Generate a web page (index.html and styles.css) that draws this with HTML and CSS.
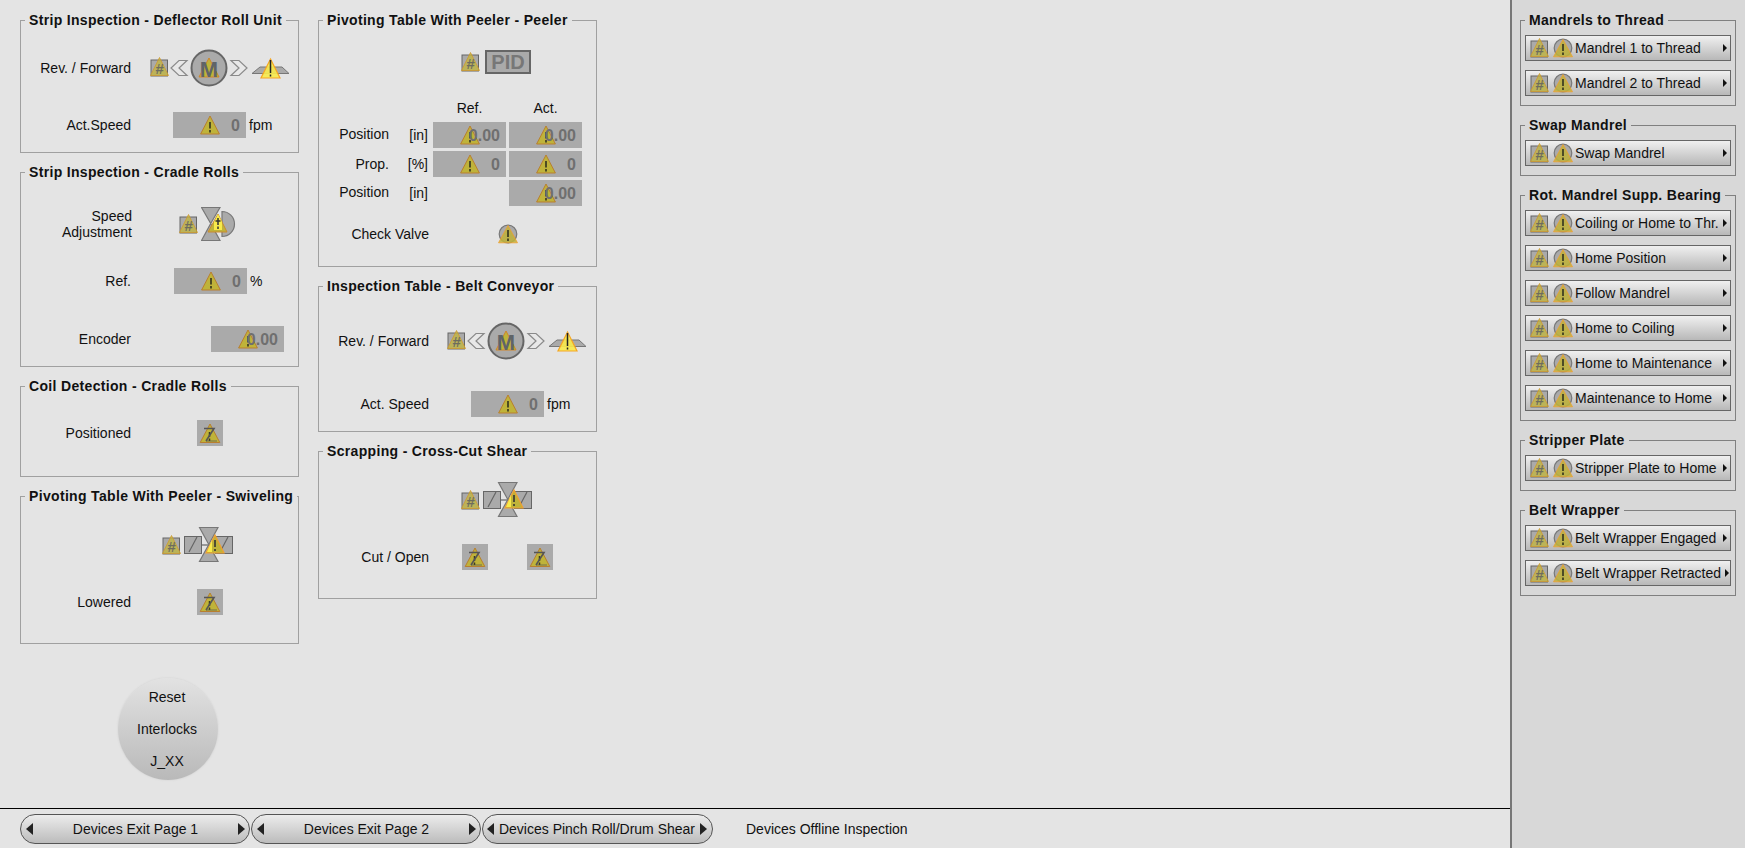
FILE: index.html
```html
<!DOCTYPE html>
<html lang="en">
<head>
    <meta charset="UTF-8">
    <title>Devices Offline Inspection</title>
    <link rel="stylesheet" href="styles.css">
</head>
<body>
    <!-- shared symbols -->
    <svg class="defs">
        <symbol id="warn" viewBox="0 0 20 20">
            <polygon points="10,1 19.4,19 0.6,19" fill="#bfb33a" stroke="#b97f2f" stroke-width="1"/>
            <path d="M10 7V13.5M10 15V17.5" stroke="#3a3a20" stroke-width="1.7" fill="none"/>
        </symbol>
        <symbol id="hash" viewBox="0 0 19 20">
            <rect x="1" y="3" width="16.5" height="16" fill="#aaa" stroke="#666"/>
            <polygon points="9.5,0.5 18.5,18.5 0.5,18.5" fill="#c2b63c" fill-opacity=".75" stroke="#cf9a30" stroke-width=".8"/>
            <text x="9.5" y="17" text-anchor="middle" font-family="Liberation Sans" font-style="italic" font-weight="700" font-size="15" fill="#5f6060" fill-opacity=".85">#</text>
        </symbol>
        <symbol id="warn-round" viewBox="0 0 20 20">
            <circle cx="10" cy="10" r="8.8" fill="#aaa" stroke="#777" stroke-width="1.2"/>
            <polygon points="10,1.5 19.5,18.8 0.5,18.8" fill="#bfb33a" fill-opacity=".85" stroke="#f0a030" stroke-width=".8"/>
            <path d="M10 6V13M10 14.5V17" stroke="#3a3a20" stroke-width="1.7" fill="none"/>
        </symbol>
        <symbol id="contact" viewBox="0 0 26 26">
            <rect width="26" height="26" fill="#aaa"/>
            <polygon points="13,4 22.8,22.5 3.2,22.5" fill="#bfb33a" stroke="#b97f2f" stroke-width="1"/>
            <path d="M12.5 12V17M12.5 18.5V21" stroke="#3a3a20" stroke-width="1.5" fill="none"/>
            <path d="M7 8.5H17L9 21" stroke="#555" stroke-width="1.6" fill="none"/>
            <path d="M9 21H20" stroke="#555" stroke-width="1.2" stroke-opacity=".6" fill="none"/>
        </symbol>
        <symbol id="drive" viewBox="0 0 140 40">
            <use href="#hash" x="0" y="9" width="19" height="20"/>
            <polygon points="29,12.5 37,12.5 29,20 37,27.5 29,27.5 21,20" fill="#e8e8e8" stroke="#8a8a8a" stroke-width="1.2"/>
            <circle cx="59" cy="20" r="17.5" fill="#aaa" stroke="#666" stroke-width="2"/>
            <polygon points="59,10 69,29 49,29" fill="#bfb33a" stroke="#d0852a" stroke-width="1"/>
            <text x="59" y="28.5" text-anchor="middle" font-family="Liberation Sans" font-weight="700" font-size="22" fill="#5f6468">M</text>
            <polygon points="89,12.5 81,12.5 89,20 81,27.5 89,27.5 97,20" fill="#e8e8e8" stroke="#8a8a8a" stroke-width="1.2"/>
            <polygon points="110,19 132,19 139,25.5 102,25.5" fill="#aaa" stroke="#777"/>
            <polygon points="120.5,11 130,30 111,30" fill="#f7ea4a" fill-opacity=".9" stroke="#f5a623" stroke-width="1.2"/>
            <path d="M120.5 12V25M120.5 26.5V28.5" stroke="#222" stroke-width="1.5" fill="none"/>
        </symbol>
        <symbol id="valve-half" viewBox="0 0 36 34">
            <path d="M21 4.5A12.5 12.5 0 0 1 21 29.5Z" fill="#aaa" stroke="#777" stroke-width="1.2"/>
            <polygon points="0.5,0.5 19,0.5 9.7,16.5 19,33.5 0.5,33.5 9.7,16.5" fill="#aaa" stroke="#777" stroke-width="1.2"/>
            <polygon points="17,7 26,25 7,25" fill="#bfb33a" stroke="#c98a30" stroke-width="1"/>
            <polygon points="17,7 21,15 21,23 13,23 13,15" fill="#f7ea4a"/>
            <path d="M17 11V18M14.5 14H19.5M17 19.5V22" stroke="#333" stroke-width="1.5" fill="none"/>
        </symbol>
        <symbol id="actuator" viewBox="0 0 50 36">
            <rect x="0.5" y="9.5" width="17" height="17" fill="#aaa" stroke="#666"/>
            <path d="M5 25L13 10" stroke="#666" stroke-width="1.2"/>
            <path d="M17 18H33" stroke="#666" stroke-width="1.2"/>
            <rect x="31.5" y="9.5" width="17" height="17" fill="#aaa" stroke="#666"/>
            <path d="M36 25L44 10" stroke="#666" stroke-width="1.2"/>
            <polygon points="15.5,0.5 34,0.5 24.8,17.5 34,34.5 15.5,34.5 24.8,17.5" fill="#aaa" stroke="#777" stroke-width="1.2"/>
            <polygon points="31,8 40,26 22,26" fill="#bfb33a" stroke="#f0a030" stroke-width="1.2"/>
            <polygon points="28,13 28,25 23,25" fill="#f7ea4a"/>
            <path d="M31 13V20M31 22V24" stroke="#333" stroke-width="1.6" fill="none"/>
        </symbol>
    </svg>

    <div class="page">
        <div class="main">
            <div class="columns">
                <div class="col">
                    <fieldset class="panel h141">
                        <legend>Strip Inspection - Deflector Roll Unit</legend>
                        <div class="row mt27">
                            <span class="label w110">Rev. / Forward</span>
                            <svg class="ico-drive ml19"><use href="#drive"/></svg>
                        </div>
                        <div class="row mt31">
                            <span class="label w110">Act.Speed</span>
                            <div class="value ml42"><svg class="ico-warn"><use href="#warn"/></svg><span class="num">0</span></div>
                            <span class="unit-after">fpm</span>
                        </div>
                    </fieldset>
                    <fieldset class="panel h203">
                        <legend>Strip Inspection - Cradle Rolls</legend>
                        <div class="row mt31">
                            <span class="label w111">Speed<br>Adjustment</span>
                            <svg class="ico-hash ml47"><use href="#hash"/></svg>
                            <svg class="ico-valve ml3"><use href="#valve-half"/></svg>
                        </div>
                        <div class="row mt31">
                            <span class="label w110">Ref.</span>
                            <div class="value ml43"><svg class="ico-warn"><use href="#warn"/></svg><span class="num">0</span></div>
                            <span class="unit-after">%</span>
                        </div>
                        <div class="row mt32">
                            <span class="label w110">Encoder</span>
                            <div class="value ml80"><svg class="ico-warn"><use href="#warn"/></svg><span class="num">0.00</span></div>
                        </div>
                    </fieldset>
                    <fieldset class="panel h99">
                        <legend>Coil Detection - Cradle Rolls</legend>
                        <div class="row mt26">
                            <span class="label w110">Positioned</span>
                            <svg class="ico-contact ml66"><use href="#contact"/></svg>
                        </div>
                    </fieldset>
                    <fieldset class="panel h156">
                        <legend>Pivoting Table With Peeler - Swiveling</legend>
                        <div class="row mt28">
                            <svg class="ico-hash ml141"><use href="#hash"/></svg>
                            <svg class="ico-actuator ml3"><use href="#actuator"/></svg>
                        </div>
                        <div class="row mt31">
                            <span class="label w110">Lowered</span>
                            <svg class="ico-contact ml66"><use href="#contact"/></svg>
                        </div>
                    </fieldset>
                    <div class="reset">
                        <span>Reset</span>
                        <span>Interlocks</span>
                        <span>J_XX</span>
                    </div>
                </div>

                <div class="col">
                    <fieldset class="panel h255">
                        <legend>Pivoting Table With Peeler - Peeler</legend>
                        <div class="row mt21">
                            <svg class="ico-hash ml142"><use href="#hash"/></svg>
                            <div class="pid">PID</div>
                        </div>
                        <div class="table">
                            <span></span>
                            <span></span>
                            <span class="head">Ref.</span>
                            <span class="head">Act.</span>
                            <span class="label up">Position</span>
                            <span class="label unit">[in]</span>
                            <div class="value"><svg class="ico-warn"><use href="#warn"/></svg><span class="num">0.00</span></div>
                            <div class="value"><svg class="ico-warn"><use href="#warn"/></svg><span class="num">0.00</span></div>
                            <span class="label">Prop.</span>
                            <span class="label unit">[%]</span>
                            <div class="value"><svg class="ico-warn"><use href="#warn"/></svg><span class="num">0</span></div>
                            <div class="value"><svg class="ico-warn"><use href="#warn"/></svg><span class="num">0</span></div>
                            <span class="label up">Position</span>
                            <span class="label unit">[in]</span>
                            <span></span>
                            <div class="value"><svg class="ico-warn"><use href="#warn"/></svg><span class="num">0.00</span></div>
                        </div>
                        <div class="row mt15">
                            <span class="label w110">Check Valve</span>
                            <svg class="ico-round ml69"><use href="#warn-round"/></svg>
                        </div>
                    </fieldset>
                    <fieldset class="panel h154">
                        <legend>Inspection Table - Belt Conveyor</legend>
                        <div class="row mt34">
                            <span class="label w110">Rev. / Forward</span>
                            <svg class="ico-drive ml18"><use href="#drive"/></svg>
                        </div>
                        <div class="row mt37">
                            <span class="label w110">Act. Speed</span>
                            <div class="value ml42"><svg class="ico-warn"><use href="#warn"/></svg><span class="num">0</span></div>
                            <span class="unit-after">fpm</span>
                        </div>
                    </fieldset>
                    <fieldset class="panel h156">
                        <legend>Scrapping - Cross-Cut Shear</legend>
                        <div class="row mt28">
                            <svg class="ico-hash ml142"><use href="#hash"/></svg>
                            <svg class="ico-actuator ml3"><use href="#actuator"/></svg>
                        </div>
                        <div class="row mt31">
                            <span class="label w110">Cut / Open</span>
                            <svg class="ico-contact ml33"><use href="#contact"/></svg>
                            <svg class="ico-contact ml39"><use href="#contact"/></svg>
                        </div>
                    </fieldset>
                </div>
            </div>

            <div class="nav">
                <div class="nav-btn"><i class="arrow-left"></i>Devices Exit Page 1<i class="arrow-right"></i></div>
                <div class="nav-btn"><i class="arrow-left"></i>Devices Exit Page 2<i class="arrow-right"></i></div>
                <div class="nav-btn tight"><i class="arrow-left"></i>Devices Pinch Roll/Drum Shear<i class="arrow-right"></i></div>
                <span class="nav-current">Devices Offline Inspection</span>
            </div>
        </div>

        <div class="sidebar">
            <fieldset class="panel side h94">
                <legend>Mandrels to Thread</legend>
                <div class="btn-list">
                    <div class="seq-btn"><svg class="ico-hash"><use href="#hash"/></svg><svg class="ico-round"><use href="#warn-round"/></svg><span>Mandrel 1 to Thread</span><i class="arrow-small"></i></div>
                    <div class="seq-btn"><svg class="ico-hash"><use href="#hash"/></svg><svg class="ico-round"><use href="#warn-round"/></svg><span>Mandrel 2 to Thread</span><i class="arrow-small"></i></div>
                </div>
            </fieldset>
            <fieldset class="panel side h59">
                <legend>Swap Mandrel</legend>
                <div class="btn-list">
                    <div class="seq-btn"><svg class="ico-hash"><use href="#hash"/></svg><svg class="ico-round"><use href="#warn-round"/></svg><span>Swap Mandrel</span><i class="arrow-small"></i></div>
                </div>
            </fieldset>
            <fieldset class="panel side h234">
                <legend>Rot. Mandrel Supp. Bearing</legend>
                <div class="btn-list">
                    <div class="seq-btn"><svg class="ico-hash"><use href="#hash"/></svg><svg class="ico-round"><use href="#warn-round"/></svg><span>Coiling or Home to Thr.</span><i class="arrow-small"></i></div>
                    <div class="seq-btn"><svg class="ico-hash"><use href="#hash"/></svg><svg class="ico-round"><use href="#warn-round"/></svg><span>Home Position</span><i class="arrow-small"></i></div>
                    <div class="seq-btn"><svg class="ico-hash"><use href="#hash"/></svg><svg class="ico-round"><use href="#warn-round"/></svg><span>Follow Mandrel</span><i class="arrow-small"></i></div>
                    <div class="seq-btn"><svg class="ico-hash"><use href="#hash"/></svg><svg class="ico-round"><use href="#warn-round"/></svg><span>Home to Coiling</span><i class="arrow-small"></i></div>
                    <div class="seq-btn"><svg class="ico-hash"><use href="#hash"/></svg><svg class="ico-round"><use href="#warn-round"/></svg><span>Home to Maintenance</span><i class="arrow-small"></i></div>
                    <div class="seq-btn"><svg class="ico-hash"><use href="#hash"/></svg><svg class="ico-round"><use href="#warn-round"/></svg><span>Maintenance to Home</span><i class="arrow-small"></i></div>
                </div>
            </fieldset>
            <fieldset class="panel side h59">
                <legend>Stripper Plate</legend>
                <div class="btn-list">
                    <div class="seq-btn"><svg class="ico-hash"><use href="#hash"/></svg><svg class="ico-round"><use href="#warn-round"/></svg><span>Stripper Plate to Home</span><i class="arrow-small"></i></div>
                </div>
            </fieldset>
            <fieldset class="panel side h94">
                <legend>Belt Wrapper</legend>
                <div class="btn-list">
                    <div class="seq-btn"><svg class="ico-hash"><use href="#hash"/></svg><svg class="ico-round"><use href="#warn-round"/></svg><span>Belt Wrapper Engaged</span><i class="arrow-small"></i></div>
                    <div class="seq-btn"><svg class="ico-hash"><use href="#hash"/></svg><svg class="ico-round"><use href="#warn-round"/></svg><span>Belt Wrapper Retracted</span><i class="arrow-small"></i></div>
                </div>
            </fieldset>
        </div>
    </div>
</body>
</html>
```

FILE: styles.css
```css
body {
    margin: 0;
    background-color: #e4e4e4;
    color: #111;
    font-family: "Liberation Sans", Arial, sans-serif;
    font-size: 14px;
    overflow: hidden;
}

.defs {
    display: none;
}

.page {
    display: flex;
    height: 848px;
}

.main {
    display: flex;
    flex-direction: column;
    width: 1510px;
}

.columns {
    display: flex;
    flex: 1;
    gap: 19px;
    padding: 12px 0 0 20px;
}

.col {
    display: flex;
    flex-direction: column;
    gap: 11px;
    width: 279px;
}

/* group boxes */
.panel {
    box-sizing: border-box;
    flex: none;
    margin: 0;
    padding: 0;
    min-width: 0;
    border: 1px solid #a0a0a0;
}

.panel legend {
    margin-left: 4px;
    padding: 0 4px;
    font-weight: bold;
    line-height: 16px;
    letter-spacing: 0.33px;
    white-space: nowrap;
}

.h59 { height: 59px; }
.h94 { height: 94px; }
.h99 { height: 99px; }
.h141 { height: 141px; }
.h154 { height: 154px; }
.h156 { height: 156px; }
.h203 { height: 203px; }
.h234 { height: 234px; }
.h255 { height: 255px; }

.row {
    display: flex;
    align-items: center;
    height: 26px;
}

.mt15 { margin-top: 15px; }
.mt21 { margin-top: 21px; }
.mt26 { margin-top: 26px; }
.mt27 { margin-top: 27px; }
.mt28 { margin-top: 28px; }
.mt31 { margin-top: 31px; }
.mt32 { margin-top: 32px; }
.mt34 { margin-top: 34px; }
.mt37 { margin-top: 37px; }

.ml3 { margin-left: 3px; }
.ml18 { margin-left: 18px; }
.ml19 { margin-left: 19px; }
.ml33 { margin-left: 33px; }
.ml39 { margin-left: 39px; }
.ml42 { margin-left: 42px; }
.ml43 { margin-left: 43px; }
.ml47 { margin-left: 47px; }
.ml66 { margin-left: 66px; }
.ml69 { margin-left: 69px; }
.ml80 { margin-left: 80px; }
.ml141 { margin-left: 141px; }
.ml142 { margin-left: 142px; }

.label {
    flex: none;
    text-align: right;
    line-height: 16px;
}

.w110 { width: 110px; }
.w111 { width: 111px; }

.unit-after {
    margin-left: 3px;
}

/* numeric display, digits sit over the stale-data triangle */
.value {
    position: relative;
    flex: none;
    box-sizing: border-box;
    width: 73px;
    height: 26px;
    padding-right: 6px;
    background-color: #aaa;
    color: #6f6f6f;
    font-size: 16px;
    font-weight: bold;
    line-height: 27px;
    text-align: right;
}

.num {
    position: relative;
}

.ico-warn {
    position: absolute;
    left: 27px;
    top: 3px;
    width: 20px;
    height: 20px;
}

.ico-hash {
    flex: none;
    width: 19px;
    height: 20px;
}

.ico-round {
    flex: none;
    width: 20px;
    height: 20px;
}

.ico-contact {
    flex: none;
    width: 26px;
    height: 26px;
}

.ico-drive {
    flex: none;
    width: 140px;
    height: 40px;
}

.ico-valve {
    flex: none;
    width: 36px;
    height: 34px;
}

.ico-actuator {
    flex: none;
    width: 50px;
    height: 36px;
}

.pid {
    box-sizing: border-box;
    width: 46px;
    height: 24px;
    margin-left: 5px;
    border: 2px solid #666;
    background-color: #aaa;
    color: #777;
    font-size: 20px;
    font-weight: bold;
    line-height: 21px;
    text-align: center;
}

.table {
    display: grid;
    grid-template-columns: 70px 38px 73px 73px;
    grid-template-rows: 19px 26px 26px 26px;
    gap: 3px;
    align-items: center;
    margin-top: 25px;
}

.head {
    align-self: start;
    line-height: 16px;
    text-align: center;
}

.unit {
    padding-right: 2px;
}

.up {
    margin-top: -3px;
}

.reset {
    display: flex;
    flex-direction: column;
    justify-content: center;
    align-items: center;
    box-sizing: border-box;
    width: 100px;
    height: 102px;
    margin: 23px 0 0 98px;
    padding-right: 2px;
    border-radius: 50%;
    background: linear-gradient(#e2e2e2, #b9b9b9);
    box-shadow: 0 0 2px #ccc;
    line-height: 32px;
}

/* bottom bar */
.nav {
    display: flex;
    align-items: center;
    gap: 1px;
    height: 39px;
    padding-left: 20px;
    border-top: 1px solid #000;
}

.nav-btn {
    display: flex;
    align-items: center;
    justify-content: space-between;
    box-sizing: border-box;
    width: 230px;
    height: 30px;
    padding: 0 4px 0 5px;
    border: 1px solid #555;
    border-radius: 15px;
    background: linear-gradient(#ececec, #bcbcbc);
}

.nav-btn.tight {
    width: 231px;
    padding: 0 5px 0 4px;
}

.nav-current {
    margin-left: 32px;
}

.arrow-left,
.arrow-right {
    width: 0;
    height: 0;
    border-top: 6px solid transparent;
    border-bottom: 6px solid transparent;
}

.arrow-left {
    border-right: 7px solid #222;
}

.arrow-right {
    border-left: 7px solid #222;
}

/* right column */
.sidebar {
    display: flex;
    flex-direction: column;
    gap: 11px;
    box-sizing: border-box;
    width: 235px;
    padding: 12px 9px 0 8px;
    border-left: 2px solid #777;
    background-color: #d8d8d8;
}

.panel.side {
    border-color: #808080;
}

.btn-list {
    display: flex;
    flex-direction: column;
    gap: 9px;
    padding: 7px 4px 0;
}

.seq-btn {
    display: flex;
    align-items: center;
    gap: 4px;
    box-sizing: border-box;
    height: 26px;
    padding-left: 4px;
    border: 1px solid #666;
    background: linear-gradient(#f0f0f0, #b8b8b8);
    white-space: nowrap;
}

.seq-btn span {
    margin-left: -2px;
}

.arrow-small {
    flex: none;
    width: 0;
    height: 0;
    margin-left: auto;
    margin-right: 3px;
    border-top: 4px solid transparent;
    border-bottom: 4px solid transparent;
    border-left: 4px solid #111;
}
```
